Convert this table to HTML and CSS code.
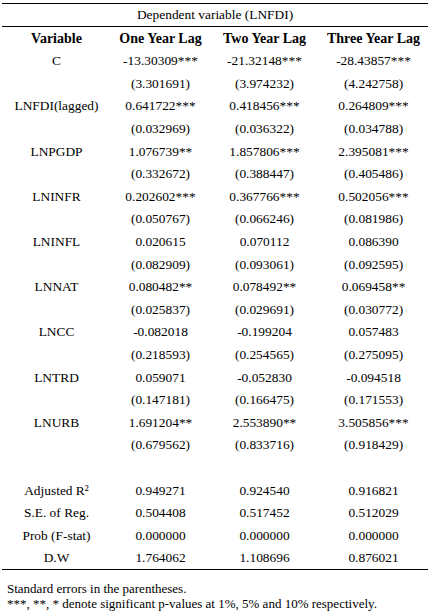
FILE: index.html
```html
<!DOCTYPE html>
<html>
<head>
<meta charset="utf-8">
<link rel="stylesheet" href="styles.css">
</head>
<body>
<div class="wrap">
<table class="reg">
<colgroup>
<col class="c1"><col class="c2"><col class="c3"><col class="c4">
</colgroup>
<thead>
<tr class="dep"><td colspan="4">Dependent variable (LNFDI)</td></tr>
<tr class="hdr"><th>Variable</th><th>One Year Lag</th><th>Two Year Lag</th><th>Three Year Lag</th></tr>
</thead>
<tbody>
<tr><td>C</td><td>-13.30309***</td><td>-21.32148***</td><td>-28.43857***</td></tr>
<tr><td></td><td>(3.301691)</td><td>(3.974232)</td><td>(4.242758)</td></tr>
<tr><td>LNFDI(lagged)</td><td>0.641722***</td><td>0.418456***</td><td>0.264809***</td></tr>
<tr><td></td><td>(0.032969)</td><td>(0.036322)</td><td>(0.034788)</td></tr>
<tr><td>LNPGDP</td><td>1.076739**</td><td>1.857806***</td><td>2.395081***</td></tr>
<tr><td></td><td>(0.332672)</td><td>(0.388447)</td><td>(0.405486)</td></tr>
<tr><td>LNINFR</td><td>0.202602***</td><td>0.367766***</td><td>0.502056***</td></tr>
<tr><td></td><td>(0.050767)</td><td>(0.066246)</td><td>(0.081986)</td></tr>
<tr><td>LNINFL</td><td>0.020615</td><td>0.070112</td><td>0.086390</td></tr>
<tr><td></td><td>(0.082909)</td><td>(0.093061)</td><td>(0.092595)</td></tr>
<tr><td>LNNAT</td><td>0.080482**</td><td>0.078492**</td><td>0.069458**</td></tr>
<tr><td></td><td>(0.025837)</td><td>(0.029691)</td><td>(0.030772)</td></tr>
<tr><td>LNCC</td><td>-0.082018</td><td>-0.199204</td><td>0.057483</td></tr>
<tr><td></td><td>(0.218593)</td><td>(0.254565)</td><td>(0.275095)</td></tr>
<tr><td>LNTRD</td><td>0.059071</td><td>-0.052830</td><td>-0.094518</td></tr>
<tr><td></td><td>(0.147181)</td><td>(0.166475)</td><td>(0.171553)</td></tr>
<tr><td>LNURB</td><td>1.691204**</td><td>2.553890**</td><td>3.505856***</td></tr>
<tr><td></td><td>(0.679562)</td><td>(0.833716)</td><td>(0.918429)</td></tr>
<tr><td></td><td></td><td></td><td></td></tr>
<tr><td>Adjusted R²</td><td>0.949271</td><td>0.924540</td><td>0.916821</td></tr>
<tr><td>S.E. of Reg.</td><td>0.504408</td><td>0.517452</td><td>0.512029</td></tr>
<tr><td>Prob (F-stat)</td><td>0.000000</td><td>0.000000</td><td>0.000000</td></tr>
<tr><td>D.W</td><td>1.764062</td><td>1.108696</td><td>0.876021</td></tr>
</tbody>
</table>
<div class="notes">
<p>Standard errors in the parentheses.</p>
<p>***, **, * denote significant p-values at 1%, 5% and 10% respectively.</p>
</div>
</div>
</body>
</html>
```

FILE: styles.css
```css
html, body {
  margin: 0;
  padding: 0;
  background: #ffffff;
}
body {
  font-family: "Liberation Serif", "Times New Roman", serif;
  color: #000000;
}
.wrap {
  width: 426px;
  padding: 3px 1px 0 2px;
}
.reg {
  width: 426px;
  border-collapse: collapse;
  table-layout: fixed;
  font-size: 13.4px;
  border-top: 1px solid #000;
  border-bottom: 1px solid #000;
}
.c1 { width: 109px; }
.c2 { width: 99px; }
.c3 { width: 109px; }
.c4 { width: 109px; }
.reg td, .reg th {
  padding: 0;
  text-align: center;
  vertical-align: middle;
  white-space: nowrap;
}
.reg tbody tr {
  height: 22.6px;
}
.dep td {
  height: 22px;
  border-bottom: 1px solid #000;
}
.hdr th {
  height: 23px;
  font-weight: bold;
  font-size: 14px;
}
.notes {
  padding: 11px 0 0 5px;
  font-size: 13px;
  line-height: 15px;
}
.notes p {
  margin: 0;
}
```
